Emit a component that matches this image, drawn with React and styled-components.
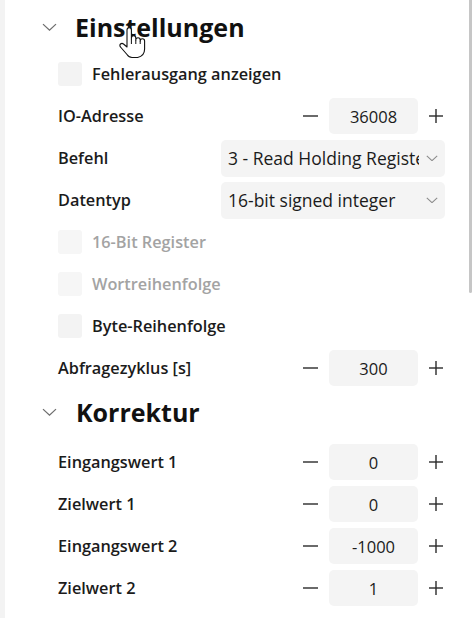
import React from 'react'
import styled, { createGlobalStyle } from 'styled-components'

const GlobalStyle = createGlobalStyle`
  html, body {
    margin: 0;
    padding: 0;
    background: #ffffff;
  }
  body {
    font-family: "Open Sans", "Noto Sans", sans-serif;
    color: #1b1b1b;
  }
`;

const Page = styled.div`
  position: relative;
  display: flex;
  width: 472px;
  height: 618px;
  overflow: hidden;
  background: #fff;
`;

const LeftStrip = styled.div`
  width: 5px;
  background: #f3f3f3;
  flex-shrink: 0;
`;

const Content = styled.div`
  flex: 1;
  display: flex;
  flex-direction: column;
  padding: 6px 20px 0 0;
`;

const ScrollTrack = styled.div`
  width: 4px;
  flex-shrink: 0;
  display: flex;
  justify-content: flex-end;
`;

const ScrollThumb = styled.div`
  width: 3px;
  height: 293px;
  background: #c6c6c6;
  border-radius: 0 0 2px 2px;
`;

const SectionHeader = styled.div`
  display: flex;
  align-items: center;
  gap: 18px;
  height: 42px;
  padding-left: 37px;
  margin-top: ${p => p.$top || 0}px;
  margin-bottom: ${p => p.$bottom || 0}px;
`;

const HeaderTitle = styled.span`
  font-size: 25px;
  font-weight: 700;
  color: #111;
  margin-left: ${p => p.$shift || 0}px;
`;

const Row = styled.div`
  display: flex;
  align-items: center;
  justify-content: space-between;
  height: 42px;
  padding-left: 53px;
`;

const Label = styled.span`
  font-size: 16.3px;
  font-weight: 600;
  color: ${p => (p.$disabled ? '#a3a3a3' : '#1b1b1b')};
`;

const CheckLine = styled.label`
  display: flex;
  align-items: center;
  gap: 10px;
`;

const CheckBox = styled.span`
  width: 24px;
  height: 24px;
  border-radius: 3px;
  background: ${p => (p.$disabled ? '#f6f6f6' : '#f3f3f3')};
`;

const Stepper = styled.div`
  display: flex;
  align-items: center;
`;

const StepButton = styled.button`
  width: 24px;
  height: 36px;
  border: none;
  background: transparent;
  padding: 0;
  display: flex;
  align-items: center;
  justify-content: center;
  color: #2b2b2b;
  margin: 0 ${p => p.$right || 0}px 0 ${p => p.$left || 0}px;
`;

const ValueBox = styled.div`
  width: 89px;
  height: 36px;
  border-radius: 5px;
  background: #f4f4f4;
  display: flex;
  align-items: center;
  justify-content: center;
  font-size: 16.5px;
  color: #1b1b1b;
`;

const Select = styled.div`
  width: 224px;
  height: 37px;
  margin-right: 3px;
  border-radius: 5px;
  background: #f4f4f4;
  display: flex;
  align-items: center;
  box-sizing: border-box;
  padding-left: 7px;
`;

const SelectText = styled.span`
  flex: 1;
  overflow: hidden;
  white-space: nowrap;
  font-size: 17.5px;
  color: #1b1b1b;
`;

const SelectArrow = styled.span`
  width: 26px;
  flex-shrink: 0;
  display: flex;
  align-items: center;
  justify-content: center;
  color: #8a8a8a;
`;

const Cursor = styled.svg`
  position: absolute;
  left: 118px;
  top: 26px;
`;

const Chevron = ({ size = 15, color = '#6e6e6e' }) => (
  <svg width={size} height={size * 0.55} viewBox="0 0 15 8" fill="none">
    <path d="M1 1 L7.5 7 L14 1" stroke={color} strokeWidth="1.3" />
  </svg>
);

const Minus = () => (
  <svg width="15" height="2" viewBox="0 0 15 2">
    <rect x="0" y="0.3" width="15" height="1.4" fill="#2b2b2b" />
  </svg>
);

const Plus = () => (
  <svg width="14" height="14" viewBox="0 0 14 14">
    <rect x="0" y="6.3" width="14" height="1.4" fill="#2b2b2b" />
    <rect x="6.3" y="0" width="1.4" height="14" fill="#2b2b2b" />
  </svg>
);

function NumberRow({ label, value }) {
  return (
    <Row>
      <Label>{label}</Label>
      <Stepper>
        <StepButton $right={7}><Minus /></StepButton>
        <ValueBox>{value}</ValueBox>
        <StepButton $left={6}><Plus /></StepButton>
      </Stepper>
    </Row>
  );
}

function SelectRow({ label, value }) {
  return (
    <Row>
      <Label>{label}</Label>
      <Select>
        <SelectText>{value}</SelectText>
        <SelectArrow><Chevron size={12} color="#8a8a8a" /></SelectArrow>
      </Select>
    </Row>
  );
}

function CheckRow({ label, disabled }) {
  return (
    <Row>
      <CheckLine>
        <CheckBox $disabled={disabled} />
        <Label $disabled={disabled}>{label}</Label>
      </CheckLine>
    </Row>
  );
}

export default function App() {
  return (
    <Page>
      <GlobalStyle />
      <LeftStrip />
      <Content>
        <SectionHeader $bottom={5}>
          <Chevron />
          <HeaderTitle>Einstellungen</HeaderTitle>
        </SectionHeader>
        <CheckRow label="Fehlerausgang anzeigen" />
        <NumberRow label="IO-Adresse" value="36008" />
        <SelectRow label="Befehl" value="3 - Read Holding Registers" />
        <SelectRow label="Datentyp" value="16-bit signed integer" />
        <CheckRow label="16-Bit Register" disabled />
        <CheckRow label="Wortreihenfolge" disabled />
        <CheckRow label="Byte-Reihenfolge" />
        <NumberRow label="Abfragezyklus [s]" value="300" />

        <SectionHeader $top={2} $bottom={8}>
          <Chevron />
          <HeaderTitle $shift={1}>Korrektur</HeaderTitle>
        </SectionHeader>
        <NumberRow label="Eingangswert 1" value="0" />
        <NumberRow label="Zielwert 1" value="0" />
        <NumberRow label="Eingangswert 2" value="-1000" />
        <NumberRow label="Zielwert 2" value="1" />
      </Content>
      <ScrollTrack>
        <ScrollThumb />
      </ScrollTrack>

      <Cursor width="28" height="33" viewBox="0 0 28 33">
        <path
          d="M9 17 V4 a2.2 2.2 0 0 1 4.4 0 V13 V12 a2.2 2.2 0 0 1 4.4 0 V14 a2.2 2.2 0 0 1 4.4 0 V15 a2.2 2.2 0 0 1 4.4 0 V23 q0 7 -7 8.5 H14 q-3 0 -5 -3 L2.5 21 a2 2 0 0 1 3 -3 L9 21 Z"
          fill="#fff"
          stroke="#111"
          strokeWidth="1.1"
          strokeLinejoin="round"
        />
        <path d="M13.4 13 V18 M17.8 14 V18 M22.2 15 V18" stroke="#111" strokeWidth="1" />
      </Cursor>
    </Page>
  );
}
